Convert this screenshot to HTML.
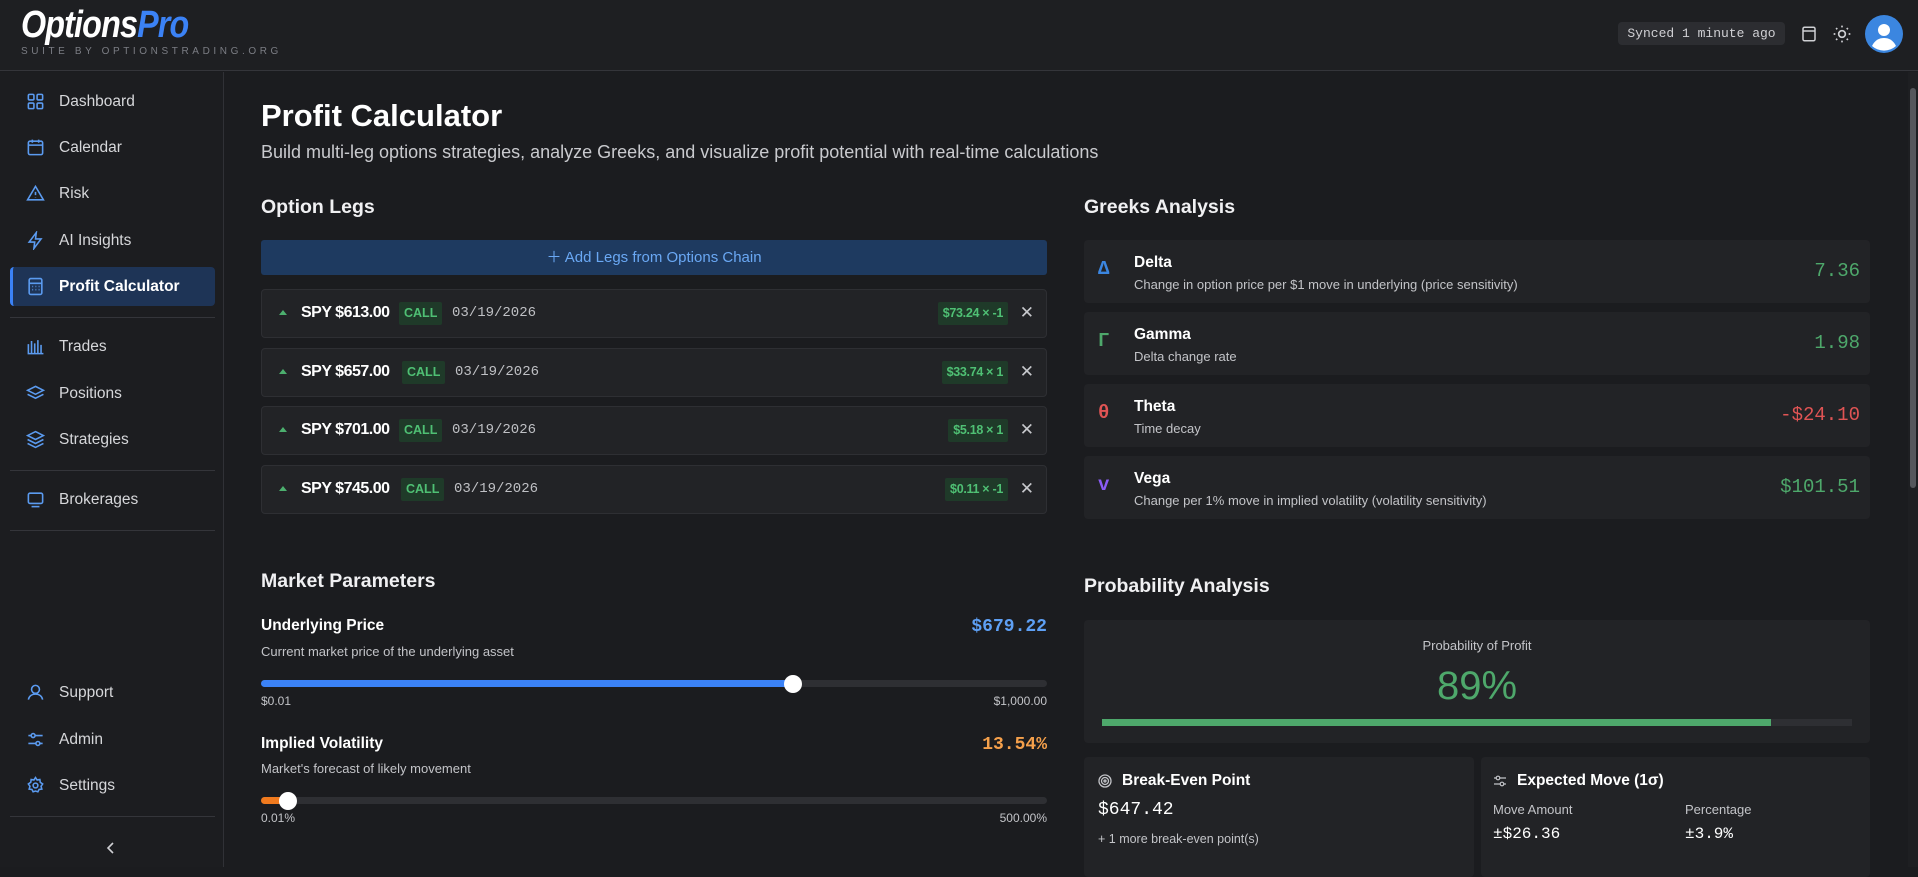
<!DOCTYPE html>
<html><head><meta charset="utf-8"><style>
*{box-sizing:border-box;margin:0;padding:0}
body{width:1918px;height:867px;overflow:hidden;background:#1b1c1f;font-family:"Liberation Sans",sans-serif;color:#e8e8ea;position:relative}
.abs{position:absolute}
.mono{font-family:"Liberation Mono",monospace}
header{position:absolute;left:0;top:0;width:1918px;height:71px;background:#1e1f22;border-bottom:1px solid #34353a}
.logo{position:absolute;left:21px;top:4px;font-size:38px;font-weight:bold;font-style:italic;letter-spacing:-1px;color:#fff;transform:scaleX(0.85);transform-origin:left}
.logo span{color:#3b82f6}
.sub{position:absolute;left:21px;top:46px;font-size:10px;letter-spacing:3.6px;color:#7b7d84}
.sync{position:absolute;left:1618px;top:22px;width:167px;height:23px;background:#2c2d31;border-radius:4px;font-size:13px;color:#d0d0d4;text-align:center;line-height:23px}
aside{position:absolute;left:0;top:72px;width:224px;height:795px;background:#1c1d20;border-right:1px solid #303136}
.nav{position:absolute;left:10px;width:205px;height:39px;font-size:15.5px;color:#d6d7da;line-height:39px;padding-left:49px}
.nav svg{position:absolute;left:16px;top:10px}
.nav.act{background:#1e3456;border-left:3px solid #3b82f6;border-radius:4px;color:#fff;font-weight:bold;padding-left:46px}
.nav.act svg{left:13px}
.div{position:absolute;left:10px;width:205px;height:1px;background:#34353a}
h1{position:absolute;left:261px;top:98px;font-size:31px;font-weight:bold;color:#fff}
.desc{position:absolute;left:261px;top:142px;font-size:18px;color:#c9cace}
h2{position:absolute;font-size:19.5px;font-weight:bold;color:#f0f0f2}
.addbtn{position:absolute;left:261px;top:240px;width:786px;height:35px;background:#1e3a60;border-radius:3px;color:#6aa8f4;font-size:15px;text-align:center;line-height:35px}
.leg{position:absolute;left:261px;width:786px;height:49px;background:#222326;border:1px solid #2e2f33;border-radius:4px}
.leg .tri{position:absolute;left:17px;top:20px;width:0;height:0;border-left:4px solid transparent;border-right:4px solid transparent;border-bottom:5px solid #4caf6e}
.leg .nm{position:absolute;left:39px;top:14px;font-size:16px;font-weight:bold;color:#fff;letter-spacing:-0.5px}
.call{position:absolute;top:12px;height:23px;padding:0 5px;background:#1f3a29;color:#4fc074;font-size:12.5px;font-weight:bold;line-height:23px;border-radius:2px}
.dt{position:absolute;top:15px;font-size:14px;color:#bfc0c4}
.pr{position:absolute;right:38px;top:12px;height:23px;padding:0 5px;background:#1f3a29;color:#4fc074;font-size:12.5px;font-weight:bold;line-height:23px;border-radius:2px;letter-spacing:-0.3px}
.x{position:absolute;right:12px;top:13px;font-size:17px;color:#c7c8cc}
.gc{position:absolute;left:1084px;width:786px;height:63px;background:#222326;border-radius:4px}
.gc .s{position:absolute;left:14px;top:18px;font-size:19px;font-weight:bold;font-family:"Liberation Mono",monospace}
.gc .t{position:absolute;left:50px;top:14px;font-size:15.5px;font-weight:bold;color:#fff}
.gc .d{position:absolute;left:50px;top:37px;font-size:13px;color:#c3c4c8}
.gc .v{position:absolute;right:10px;top:20px;font-size:19px;font-family:"Liberation Mono",monospace}
.g{color:#4ea86b}.r{color:#e05454}
.lbl{position:absolute;font-size:15.5px;font-weight:bold;color:#fff}
.sm{position:absolute;font-size:13px;color:#c3c4c8}
.track{position:absolute;left:261px;width:786px;height:7px;background:#2e2f33;border-radius:4px}
.thumb{position:absolute;width:18px;height:18px;border-radius:50%;background:#fff}
.card{position:absolute;background:#222326;border-radius:4px}
</style></head><body>
<header>
<div class="logo">Options<span>Pro</span></div>
<div class="sub">SUITE BY OPTIONSTRADING.ORG</div>
<div class="sync mono">Synced 1 minute ago</div>
<svg class="abs" style="left:1800px;top:25px" width="18" height="18" viewBox="0 0 24 24" fill="none" stroke="#cfd0d4" stroke-width="2"><rect x="4" y="3" width="16" height="18" rx="2"/><line x1="4" y1="8" x2="20" y2="8"/></svg>
<svg class="abs" style="left:1832px;top:24px" width="20" height="20" viewBox="0 0 24 24" fill="none" stroke="#cfd0d4" stroke-width="2"><circle cx="12" cy="12" r="4"/><path d="M12 2v2M12 20v2M4.9 4.9l1.4 1.4M17.7 17.7l1.4 1.4M2 12h2M20 12h2M4.9 19.1l1.4-1.4M17.7 6.3l1.4-1.4"/></svg>
<svg class="abs" style="left:1865px;top:15px" width="38" height="38" viewBox="0 0 38 38"><circle cx="19" cy="19" r="19" fill="#3b86e0"/><circle cx="19" cy="15" r="6" fill="#fff"/><path d="M7 31c3-6 7-8 12-8s9 2 12 8a18 18 0 0 1-24 0z" fill="#fff"/></svg>
</header>
<aside>
<div class="nav" style="top:10px"><svg width="19" height="19" viewBox="0 0 24 24" fill="none" stroke="#5b9bf0" stroke-width="2"><rect x="3" y="3" width="7" height="7" rx="1.5"/><rect x="14" y="3" width="7" height="7" rx="1.5"/><rect x="3" y="14" width="7" height="7" rx="1.5"/><rect x="14" y="14" width="7" height="7" rx="1.5"/></svg>Dashboard</div>
<div class="nav" style="top:56px"><svg width="19" height="19" viewBox="0 0 24 24" fill="none" stroke="#5b9bf0" stroke-width="2"><rect x="3" y="4" width="18" height="17" rx="2"/><path d="M3 9h18M8 2v4M16 2v4"/></svg>Calendar</div>
<div class="nav" style="top:102px"><svg width="19" height="19" viewBox="0 0 24 24" fill="none" stroke="#5b9bf0" stroke-width="2"><path d="M12 3L2 20h20z"/><path d="M12 10v4M12 17v.5"/></svg>Risk</div>
<div class="nav" style="top:149px"><svg width="19" height="19" viewBox="0 0 24 24" fill="none" stroke="#5b9bf0" stroke-width="2"><path d="M13 2L4 14h7l-1 8 9-12h-7z"/></svg>AI Insights</div>
<div class="nav act" style="top:195px"><svg width="19" height="19" viewBox="0 0 24 24" fill="none" stroke="#5b9bf0" stroke-width="2"><rect x="4" y="2" width="16" height="20" rx="2"/><path d="M4 8h16M8 12h1M12 12h1M16 12h1M8 16h1M12 16h1M16 16h1"/></svg>Profit Calculator</div>
<div class="div" style="top:245px"></div>
<div class="nav" style="top:255px"><svg width="19" height="19" viewBox="0 0 24 24" fill="none" stroke="#5b9bf0" stroke-width="2"><path d="M3 21V9M7 21V5M11 21V8M15 21V4M19 21V10M2 21h20"/></svg>Trades</div>
<div class="nav" style="top:302px"><svg width="19" height="19" viewBox="0 0 24 24" fill="none" stroke="#5b9bf0" stroke-width="2"><path d="M12 3l10 5-10 5L2 8z"/><path d="M2 13l10 5 10-5"/></svg>Positions</div>
<div class="nav" style="top:348px"><svg width="19" height="19" viewBox="0 0 24 24" fill="none" stroke="#5b9bf0" stroke-width="2"><path d="M12 2l10 5-10 5L2 7z"/><path d="M2 12l10 5 10-5M2 17l10 5 10-5"/></svg>Strategies</div>
<div class="div" style="top:398px"></div>
<div class="nav" style="top:408px"><svg width="19" height="19" viewBox="0 0 24 24" fill="none" stroke="#5b9bf0" stroke-width="2"><rect x="3" y="4" width="18" height="13" rx="2"/><path d="M7 21h10"/></svg>Brokerages</div>
<div class="div" style="top:458px"></div>
<div class="nav" style="top:601px"><svg width="19" height="19" viewBox="0 0 24 24" fill="none" stroke="#5b9bf0" stroke-width="2"><circle cx="12" cy="8" r="5"/><path d="M3 21c1-5 5-7 9-7s8 2 9 7"/></svg>Support</div>
<div class="nav" style="top:648px"><svg width="19" height="19" viewBox="0 0 24 24" fill="none" stroke="#5b9bf0" stroke-width="2"><path d="M3 7h18M3 17h18"/><circle cx="9" cy="7" r="2.5" fill="#1c1d20"/><circle cx="15" cy="17" r="2.5" fill="#1c1d20"/></svg>Admin</div>
<div class="nav" style="top:694px"><svg width="19" height="19" viewBox="0 0 24 24" fill="none" stroke="#5b9bf0" stroke-width="2"><circle cx="12" cy="12" r="3"/><path d="M12 2l2 3 3.5-.5.5 3.5 3 2-2 3 1 3.5-3.5.5L15 20l-3-1-3 1-1.5-3L4 16.5 5 13l-2-3 3-2 .5-3.5L10 5z"/></svg>Settings</div>
<div class="div" style="top:744px"></div>
<svg class="abs" style="left:105px;top:769px" width="12" height="14" viewBox="0 0 12 14" fill="none" stroke="#cfd0d4" stroke-width="1.6"><path d="M8 2L3 7l5 5"/></svg>
</aside>
<h1>Profit Calculator</h1>
<div class="desc">Build multi-leg options strategies, analyze Greeks, and visualize profit potential with real-time calculations</div>
<h2 style="left:261px;top:196px">Option Legs</h2>
<h2 style="left:1084px;top:196px">Greeks Analysis</h2>
<div class="addbtn">＋ Add Legs from Options Chain</div>
<div class="leg" style="top:289px"><div class="tri"></div><div class="nm">SPY $613.00</div><div class="call" style="left:137px">CALL</div><div class="dt mono" style="left:190px">03/19/2026</div><div class="pr">$73.24 × -1</div><div class="x">✕</div></div>
<div class="leg" style="top:348px"><div class="tri"></div><div class="nm">SPY $657.00</div><div class="call" style="left:140px">CALL</div><div class="dt mono" style="left:193px">03/19/2026</div><div class="pr">$33.74 × 1</div><div class="x">✕</div></div>
<div class="leg" style="top:406px"><div class="tri"></div><div class="nm">SPY $701.00</div><div class="call" style="left:137px">CALL</div><div class="dt mono" style="left:190px">03/19/2026</div><div class="pr">$5.18 × 1</div><div class="x">✕</div></div>
<div class="leg" style="top:465px"><div class="tri"></div><div class="nm">SPY $745.00</div><div class="call" style="left:139px">CALL</div><div class="dt mono" style="left:192px">03/19/2026</div><div class="pr">$0.11 × -1</div><div class="x">✕</div></div>

<div class="gc" style="top:240px"><div class="s" style="color:#3b86e0">Δ</div><div class="t">Delta</div><div class="d">Change in option price per $1 move in underlying (price sensitivity)</div><div class="v g">7.36</div></div>
<div class="gc" style="top:312px"><div class="s" style="color:#4ea86b">Γ</div><div class="t">Gamma</div><div class="d">Delta change rate</div><div class="v g">1.98</div></div>
<div class="gc" style="top:384px"><div class="s r">θ</div><div class="t">Theta</div><div class="d">Time decay</div><div class="v r">-$24.10</div></div>
<div class="gc" style="top:456px"><div class="s" style="color:#8b5cf6">v</div><div class="t">Vega</div><div class="d">Change per 1% move in implied volatility (volatility sensitivity)</div><div class="v g">$101.51</div></div>

<h2 style="left:261px;top:570px">Market Parameters</h2>
<div class="lbl" style="left:261px;top:617px">Underlying Price</div>
<div class="sm" style="left:261px;top:644px">Current market price of the underlying asset</div>
<div class="abs mono" style="right:871px;top:617px;font-size:18px;font-weight:bold;color:#5ea0f5">$679.22</div>
<div class="track" style="top:680px"><div class="abs" style="left:0;top:0;width:532px;height:7px;background:#3b82f6;border-radius:4px"></div><div class="thumb" style="left:523px;top:-5px"></div></div>
<div class="sm" style="left:261px;top:694px;font-size:12px">$0.01</div>
<div class="sm" style="right:871px;top:694px;font-size:12px">$1,000.00</div>
<div class="lbl" style="left:261px;top:735px">Implied Volatility</div>
<div class="sm" style="left:261px;top:761px">Market's forecast of likely movement</div>
<div class="abs mono" style="right:871px;top:735px;font-size:18px;font-weight:bold;color:#f5a04b">13.54%</div>
<div class="track" style="top:797px"><div class="abs" style="left:0;top:0;width:28px;height:7px;background:#f07a1e;border-radius:4px"></div><div class="thumb" style="left:18px;top:-5px"></div></div>
<div class="sm" style="left:261px;top:811px;font-size:12px">0.01%</div>
<div class="sm" style="right:871px;top:811px;font-size:12px">500.00%</div>

<h2 style="left:1084px;top:575px">Probability Analysis</h2>
<div class="card" style="left:1084px;top:620px;width:786px;height:123px">
<div class="abs" style="left:0;width:786px;top:18px;text-align:center;font-size:13px;color:#c3c4c8">Probability of Profit</div>
<div class="abs" style="left:0;width:786px;top:44px;text-align:center;font-size:40px;color:#4ea86b">89%</div>
<div class="abs" style="left:18px;top:99px;width:750px;height:7px;background:#2e2f33"><div style="width:669px;height:7px;background:#4ea86b"></div></div>
</div>
<div class="card" style="left:1084px;top:757px;width:390px;height:120px">
<svg class="abs" style="left:14px;top:17px" width="14" height="14" viewBox="0 0 14 14" fill="none" stroke="#c3c4c8" stroke-width="1.3"><circle cx="7" cy="7" r="6"/><circle cx="7" cy="7" r="3.5"/><circle cx="7" cy="7" r="1"/></svg>
<div class="abs" style="left:38px;top:15px;font-size:15.5px;font-weight:bold;color:#fff">Break-Even Point</div>
<div class="abs mono" style="left:14px;top:43px;font-size:18px;color:#fff">$647.42</div>
<div class="abs" style="left:14px;top:75px;font-size:12.5px;color:#c3c4c8">+ 1 more break-even point(s)</div>
</div>
<div class="card" style="left:1481px;top:757px;width:389px;height:120px">
<svg class="abs" style="left:12px;top:17px" width="14" height="14" viewBox="0 0 14 14" fill="none" stroke="#c3c4c8" stroke-width="1.2"><path d="M1 4h12M1 10h12"/><circle cx="5" cy="4" r="1.8" fill="#222326"/><circle cx="9" cy="10" r="1.8" fill="#222326"/></svg>
<div class="abs" style="left:36px;top:15px;font-size:15.5px;font-weight:bold;color:#fff">Expected Move (1σ)</div>
<div class="abs" style="left:12px;top:45px;font-size:13px;color:#c3c4c8">Move Amount</div>
<div class="abs" style="left:204px;top:45px;font-size:13px;color:#c3c4c8">Percentage</div>
<div class="abs mono" style="left:12px;top:68px;font-size:16px;color:#fff">±$26.36</div>
<div class="abs mono" style="left:204px;top:68px;font-size:16px;color:#fff">±3.9%</div>
</div>
<div class="abs" style="left:1908px;top:72px;width:10px;height:795px;background:#1e1f22"></div>
<div class="abs" style="left:1910px;top:88px;width:6px;height:400px;background:#55575c;border-radius:3px"></div>
</body></html>
